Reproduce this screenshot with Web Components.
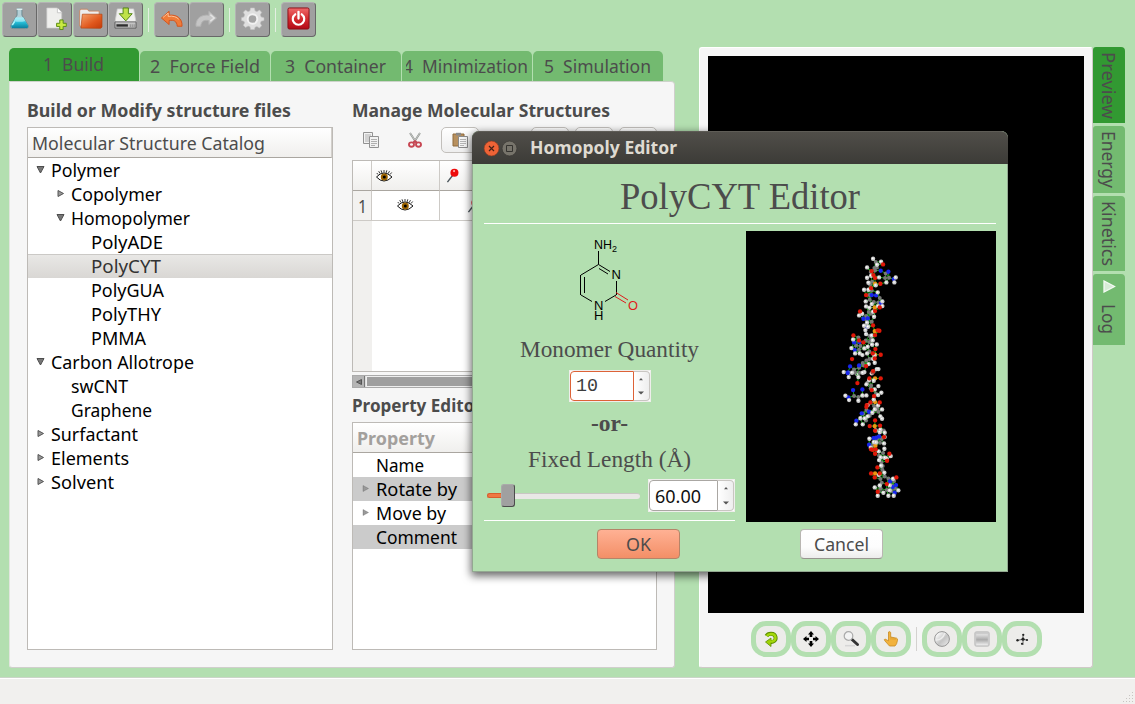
<!DOCTYPE html>
<html lang="en">
<head>
<meta charset="utf-8">
<title>Homopoly Editor</title>
<style>
html,body{margin:0;height:100%;overflow:hidden}
body{background:#b3dfb0;font:18px/24px "Noto Sans","Open Sans",sans-serif;color:#4c4c4c}
</style>
</head>
<body>
<md-workbench></md-workbench>
<script>
const ICONS = {
flask:`<svg viewBox="0 0 24 24"><defs><linearGradient id="g" x2="0" y2="1"><stop offset="0" stop-color="#8ee7f4"/><stop offset=".5" stop-color="#22b9d3"/><stop offset="1" stop-color="#0b7f9d"/></linearGradient></defs><path d="M9.500 1.500h5v7l6.300 10.200q1.500 3.800-2.300 3.800h-13q-3.800 0-2.300-3.800L9.500 8.500z" fill="#b4cfd6" stroke="#527982" stroke-width=".7"/><path d="M8 11h8l4.700 8q1.200 3-2 3h-13q-3.200 0-2-3z" fill="url(#g)"/><path d="M8 11h8l2 3.500q-6 2-12 0z" fill="#baf5fb" opacity=".6"/><path d="M9 2.300h6" stroke="#e7f5f5" stroke-width="1.500"/><path d="M7 15l-2.500 4" stroke="#b9f7fa" stroke-width="1.500"/></svg>`,
newfile:`<svg viewBox="0 0 24 24"><path d="M4 1h11l4.500 4.500V22H4z" fill="#efefed" stroke="#c9c9c9" stroke-width=".7"/><path d="M15 1v5h4.500" fill="#fff" stroke="#bcbcbc" stroke-width=".8"/><path d="M17.500 13.500h3.500v3.500h3.300v3.300H21v3.200h-3.500v-3.200h-3.300V17h3.300z" fill="#c9e943" stroke="#5a8c12" stroke-width="1"/></svg>`,
folder:`<svg viewBox="0 0 24 24"><defs><linearGradient id="g" x2="1" y2="1"><stop offset="0" stop-color="#f5a06a"/><stop offset=".6" stop-color="#e0571c"/><stop offset="1" stop-color="#c23b0a"/></linearGradient></defs><path d="M.700 20V4l1-1.700h7l1.500 2H21V20z" fill="#eee" stroke="#c77b52" stroke-width=".8"/><path d="M2 22l1.500-14.500H24V21l-1.500 1.300z" fill="url(#g)" stroke="#b5430f" stroke-width=".7"/></svg>`,
drive:`<svg viewBox="0 0 24 24"><path d="M3.500 2h17l2.500 14H1z" fill="#f0f0ee" stroke="#d0d0d0" stroke-width=".8"/><path d="M1 15.500h22v6.500H1z" fill="#c4c4c4" stroke="#4a4a4a" stroke-width=".8"/><path d="M2.500 18h12v2.500h-12z" fill="#2e2e2e"/><path d="M17 18v3m2-3v3m2-3v3" stroke="#888"/><path d="M9.500 1h5.500v6h4l-6.700 7.500L5.500 7h4z" fill="#bfe24a" stroke="#4f8415" stroke-width="1"/></svg>`,
undo:`<svg viewBox="0 0 24 24"><path d="M9.500 4.500L1.500 11.500l8 6.800v-4.200c5-.8 8 .5 8.500 6h5C23.500 11.500 17 7.700 9.500 8.600z" fill="#ef7b39" stroke="#d4511a" stroke-width="1" stroke-linejoin="round"/><path d="M3 11l5.500-4.700v3.500c5-.8 9 .5 11 3" fill="none" stroke="#ffc49a" stroke-width="1"/></svg>`,
redo:`<svg viewBox="0 0 24 24"><path d="M14.500 4.500l8 7-8 6.800v-4.200c-5-.8-8 .5-8.500 6H1C.5 11.500 7 7.700 14.500 8.600z" fill="#c5c5c5" stroke="#b2b2b2" stroke-width="1" stroke-linejoin="round"/><path d="M16 8l4 3.500-4 3.200" fill="none" stroke="#e3e3e3" stroke-width="1.500"/></svg>`,
gear:`<svg viewBox="0 0 24 24"><path d="M10 1h4l.6 3 2 .9L19.300 3.200l2.300 2.400-1.500 2.600.9 2.200 3 .7v3l-3 .7-.9 2.100 1.500 2.700-2.400 2.200-2.600-1.500-2 .8L14 23.500h-4l-.6-2.900-2-.8-2.700 1.500-2.300-2.300 1.500-2.600L3 14.800l-2.500-.7v-3L3 10.400l.9-2.200L2.400 5.600l2.300-2.400 2.700 1.700 2-.9z" fill="#dfdfdf" stroke="#c2c2c2" stroke-width=".6"/><circle cx="12" cy="12.500" r="5" fill="#a5a5a5" stroke="#f2f2f2" stroke-width="2"/></svg>`,
power:`<svg viewBox="0 0 24 24"><defs><linearGradient id="g" x2="0" y2="1"><stop offset="0" stop-color="#ee6a6a"/><stop offset=".5" stop-color="#d52d31"/><stop offset="1" stop-color="#b30a17"/></linearGradient></defs><rect x="1" y="1" width="22" height="22" rx="1.500" fill="url(#g)" stroke="#8b0b15" stroke-width="1"/><path d="M8.600 7.600a6 6 0 1 0 6.800 0" fill="none" stroke="#fff" stroke-width="2.300" stroke-linecap="round"/><path d="M12 5v7" stroke="#fff" stroke-width="2.400" stroke-linecap="round"/></svg>`,
copy:`<svg viewBox="0 0 16 16"><g fill="#f2f2f2" stroke="#929292"><path d="M.5.5h9v11h-9z"/><path d="M6.500 4.500h9v11h-9z"/></g><path d="M2 3h6M2 5h4M2 7h4M2 9h4M8 7.500h6M8 9.500h6M8 11.500h6M8 13.500h4" stroke="#b0b0b0"/></svg>`,
cut:`<svg viewBox="0 0 16 16"><path d="M3 1l6.500 10M13 1L6.500 11" stroke="#8c918c" stroke-width="1.900"/><path d="M3 1l6 9M13 1L7 10" stroke="#dedede" stroke-width=".7"/><g fill="none" stroke="#c74753" stroke-width="1.900"><ellipse cx="4.500" cy="12.600" rx="2.500" ry="2.200"/><ellipse cx="11.500" cy="12.600" rx="2.500" ry="2.200"/><path d="M6 11l2-2 2 2"/></g></svg>`,
paste:`<svg viewBox="0 0 16 16"><path d="M1 2h11v12H1z" fill="#b7905e" stroke="#8f6b3d"/><path d="M4 .8h5V3.500H4z" fill="#888"/><path d="M6.500 4.500h9v11h-9z" fill="#f5f5f5" stroke="#8b8b8b"/><path d="M8 7.500h6M8 9.500h6M8 11.500h6M8 13.500h4" stroke="#b5b5b5"/></svg>`,
eye:`<svg viewBox="0 0 17 13"><path d="M.5 7.500Q4 3.500 8 3.500t8 4Q12 11.500 8 11.500t-7.500-4z" fill="#fff" stroke="#111" stroke-width="1"/><circle cx="8.300" cy="7.500" r="3.500" fill="#9c6300"/><circle cx="8.300" cy="7.500" r="1.500" fill="#000"/><path d="M2 5L.8 3.500M4 4L2.700 1.700M6 3.500L5 .8M8 3.200V.5M10 3.500l.8-2.700M12 4.200l1.500-2.500M14 5l1.700-2" stroke="#222" stroke-width=".9"/></svg>`,
pin:`<svg viewBox="0 0 16 16"><path d="M1.500 15L7 8" stroke="#4c565c" stroke-width="1.500"/><circle cx="9" cy="5" r="4.300" fill="#ee0b0b"/><circle cx="8.600" cy="3.300" r="1.200" fill="#ffaaaa"/></svg>`,
rotate:`<svg viewBox="0 0 16 16"><path d="M3.500 5C5 2 11.500 1.500 12.500 6c.8 3.600-2.500 5.500-5.500 4.800" fill="none" stroke="#5c8e00" stroke-width="4"/><path d="M8 7L2.500 11 8 15.500z" fill="#9fd204" stroke="#5c8e00" stroke-width=".8"/><path d="M3.800 5C5.500 2.300 11.500 2 12.400 6c.7 3.300-2.500 5-5.500 4.600" fill="none" stroke="#a4d80b" stroke-width="2.400"/></svg>`,
move:`<svg viewBox="0 0 16 16"><path d="M8 0l3 3.500H9.300V6H6.700V3.500H5zM8 16l-3-3.500h1.700V10h2.600v2.500H11zM0 8l3.500-3v1.700H6v2.600H3.500V11zM16 8l-3.500 3V9.300H10V6.700h2.500V5z"/></svg>`,
zoom:`<svg viewBox="0 0 16 16"><path d="M2 14.700h10" stroke="#d6d6d6" stroke-width="1.500"/><path d="M9 8.500l5.500 5" stroke="#333" stroke-width="3" stroke-linecap="round"/><circle cx="5.500" cy="5" r="4.300" fill="#f3f3f3" stroke="#aaa" stroke-width="1.200"/></svg>`,
hand:`<svg viewBox="0 0 16 16"><path d="M5.500 1q1.500-1 2.200.5V6l6 1.200q1 .3.800 2l-.9 3.600L12 15H6.500L2 10Q.5 8.300 2 8l3.500 1.800z" fill="#f2b23d" stroke="#c88b23" stroke-width=".8"/><path d="M8 6v2.500M10 6.500v2.300M12 7v2" stroke="#cf9125" stroke-width=".6"/></svg>`,
sphere:`<svg viewBox="0 0 16 16"><defs><linearGradient id="g" x2="1" y2="1"><stop offset=".2" stop-color="#f4f4f4"/><stop offset=".55" stop-color="#c4c4c4"/><stop offset="1" stop-color="#efefef"/></linearGradient></defs><circle cx="8" cy="8" r="7.400" fill="url(#g)" stroke="#8c8c8c" stroke-width=".9"/><path d="M1.500 9Q8 9.500 11 2" fill="none" stroke="#ededed" stroke-width="1.500"/></svg>`,
cube:`<svg viewBox="0 0 16 16"><defs><linearGradient id="g" x2="0" y2="1"><stop offset="0" stop-color="#e2e2e2"/><stop offset=".5" stop-color="#aaa"/><stop offset="1" stop-color="#eee"/></linearGradient></defs><rect x=".8" y=".8" width="14.400" height="14.400" rx="1.500" fill="#ccc" stroke="#c1c1c1"/><rect x="2.200" y="3.200" width="11.600" height="11" fill="url(#g)"/></svg>`,
atoms:`<svg viewBox="0 0 16 16"><path d="M3 9.500l6-1.300 4 1M9 3v11" fill="none" stroke="#555" stroke-width=".9"/><g fill="#222"><circle cx="3.500" cy="9.300" r="1.200"/><circle cx="9" cy="8.200" r="1.600"/><circle cx="9.300" cy="3.800" r="1.100"/><circle cx="13" cy="9" r="1.100"/><circle cx="8" cy="12.800" r="1.100"/></g></svg>`
};
/* Registers an element whose shadow root is cloned from a template. */
function element(name, css, html, setup){
  const t=document.createElement('template');
  t.innerHTML=`<style>${css}</style>${html}`;
  customElements.define(name,class extends HTMLElement{
    constructor(){super();this.attachShadow({mode:'open'}).append(t.content.cloneNode(true));}
    connectedCallback(){ if(setup) setup(this,this.shadowRoot); }
  });
}
element('md-icon',`:host{display:block;width:26px;height:26px;flex:none}span{display:block;height:100%}svg{display:block;width:100%;height:100%;overflow:visible}`,`<span></span>`,
 (h,r)=>{r.querySelector('span').innerHTML=ICONS[h.getAttribute('name')];});

element('tool-button',`:host{display:flex;align-items:center;justify-content:center;box-sizing:border-box;width:35px;height:35px;background:#a0a0a0;border:1px solid #b4b4b4;border-right:1.500px solid #686868;border-bottom:1.500px solid #686868;border-radius:4px}md-icon{width:23px;height:23px;margin-top:-2px}`,`<div></div>`,
 (h,r)=>{r.querySelector('div').innerHTML=`<md-icon name="${h.getAttribute('icon')}"></md-icon>`;});
element('tool-separator',`:host{display:block;width:1px;height:24px;background:#e4efe2;margin:0 5px}`,``);
element('main-toolbar',`:host{display:flex;align-items:center;height:35px;padding:2px 2px 0;gap:0}.g{display:flex;gap:.3px}`,`
<div class="g"><tool-button icon="flask"></tool-button><tool-button icon="newfile"></tool-button><tool-button icon="folder"></tool-button><tool-button icon="drive"></tool-button></div><tool-separator></tool-separator>
<div class="g"><tool-button icon="undo"></tool-button><tool-button icon="redo"></tool-button></div><tool-separator></tool-separator>
<tool-button icon="gear"></tool-button><tool-separator></tool-separator><tool-button icon="power"></tool-button>`);

element('tab-item',`:host{display:flex;box-sizing:border-box;width:130px;height:30px;justify-content:center;background:#73ba70;border-radius:5px 5px 0 0;overflow:hidden;padding:3px 1px 0 0;white-space:pre}
:host([active]){height:33px;background:#329932;padding-top:4px}:host([clip]){padding-left:4px;padding-right:5px;justify-content:flex-start}.c{overflow:hidden;display:flex;justify-content:inherit}`,`<div class="c"><slot></slot></div>`);
element('tab-strip',`:host{display:flex;align-items:flex-end;gap:1px;height:33px;padding-left:0}`,`
<tab-item active><fit-text w="61">1  Build</fit-text></tab-item><tab-item><fit-text w="110">2  Force Field</fit-text></tab-item><tab-item><fit-text w="101">3  Container</fit-text></tab-item><tab-item clip><fit-text w="125" style="margin-left:-3px">4  Minimization</fit-text></tab-item><tab-item><fit-text w="107">5  Simulation</fit-text></tab-item>`);

element('tree-row',`:host{display:flex;height:24px;align-items:center;color:#000;box-sizing:border-box;padding-left:calc(8px + var(--d,0)*20px)}
:host([selected]){background:linear-gradient(#e9e8e6,#d9d7d4);color:#333;box-shadow:inset 0 1px #cbc9c6}
i{width:8px;height:24px;margin-right:7px;flex:none;display:flex;align-items:flex-start;justify-content:center}
svg{width:9px;height:9px;margin-top:7px;display:none;flex:none}:host([open]) .o,:host([closed]) .c{display:block}
:host([shade]){background:#cbcbcb}`,`<i><svg class="o" viewBox="0 0 9 9"><path d="M1 1.500h7L4.500 8z" fill="#777" stroke="#4d4d4d"/></svg><svg class="c" viewBox="0 0 9 9"><path d="M2 1.500v6L7.500 4.500z" fill="#999" stroke="#555" style="stroke-width:var(--sw,1)"/></svg></i><slot></slot>`);
element('column-header',`:host{display:flex;align-items:center;box-sizing:border-box;height:30px;padding-left:4px;background:linear-gradient(#fff,#f0efed);border-bottom:1px solid #aaa6a0;border-right:1px solid #d2cfcb}`,`<slot></slot>`);
element('structure-catalog',`:host{display:flex;flex-direction:column;width:306px}.box{flex:1;background:#fff;border:1px solid #bdbab6}b{height:24px;margin:16px 0 5px;display:block}`,`
<b><fit-text w="264">Build or Modify structure files</fit-text></b><div class="box"><column-header><fit-text w="233">Molecular Structure Catalog</fit-text></column-header><div class="rows"></div></div>`,
(h,r)=>{r.querySelector('.rows').innerHTML=[
[0,'open','Polymer',69],[1,'closed','Copolymer',91],[1,'open','Homopolymer',119],[2,'','PolyADE',72],[2,'selected','PolyCYT',70],[2,'','PolyGUA',73],[2,'','PolyTHY',70],[2,'','PMMA',55],[0,'open','Carbon Allotrope',143],[1,'','swCNT',57],[1,'','Graphene',81],[0,'closed','Surfactant',87],[0,'closed','Elements',78],[0,'closed','Solvent',63]]
.map(([d,s,t,w])=>`<tree-row style="--d:${d}" ${s}><fit-text w="${w}">${t}</fit-text></tree-row>`).join('');});

element('edit-toolbar',`:host{display:flex;height:26px;gap:6px}span{display:flex;align-items:center;justify-content:center;width:38px;box-sizing:border-box;border:1px solid transparent;border-radius:5px}.b{background:linear-gradient(#fff,#eee);border-color:#c2bfbb}md-icon{width:16px;height:16px}`,
`<span></span><span></span><span class="b" style="margin-left:1px"></span><span style="width:41px"></span><span class="b"></span><span class="b"></span><span class="b"></span>`,
(h,r)=>['copy','cut','paste'].forEach((n,i)=>{r.querySelectorAll('span')[i].innerHTML=`<md-icon name="${n}"></md-icon>`;}));
element('structure-table',`:host{display:grid;grid-template:30px 30px 1fr/19px 68px 1fr;height:212px;box-sizing:border-box;border:1px solid #bdbab6;background:#fff}
div{border-right:1px solid #cdcac6;border-bottom:1px solid #cdcac6;display:flex;align-items:center;box-sizing:border-box}.h{background:linear-gradient(#fff,#f0efed);border-bottom-color:#aaa6a0}.n{background:#f3f2f0}.last{background:#f1f0ee;border:0}md-icon{width:17px;height:14px}.p{width:15px;height:15px}`,
`<div class="h"></div><div class="h" style="padding-left:4px"><md-icon name="eye"></md-icon></div><div class="h" style="padding-left:6px"><md-icon class="p" name="pin"></md-icon></div><div class="n" style="justify-content:center"><fit-text w="9">1</fit-text></div><div style="padding-left:25px;padding-bottom:2px"><md-icon name="eye"></md-icon></div><div style="padding-left:27px"><md-icon class="p" name="pin"></md-icon></div><div class="last"></div>`);
element('scroll-strip',`:host{display:flex;height:13px;box-sizing:border-box;border:1px solid #aaa;background:#ddd;gap:1px}i{width:11px;background:#b5b5b5;border-right:1px solid #777;display:flex;align-items:center;justify-content:center}s{flex:1;background:#9f9f9f;border:1px solid #eee;border-width:1px}svg{width:6px;height:6px}`,`<i><svg viewBox="0 0 6 6"><path d="M5.500.5v5L.5 3z" fill="#777" stroke="#555"/></svg></i><s></s>`);
element('property-editor',`:host{display:block;flex:1;background:#fff;border:1px solid #bdbab6;box-sizing:border-box}column-header{color:#a3a09d;font-weight:bold}tree-row{padding-left:8px;--sw:.3}`,
`<column-header><fit-text w="78">Property</fit-text></column-header><tree-row><fit-text w="48">Name</fit-text></tree-row><tree-row closed shade><fit-text w="81">Rotate by</fit-text></tree-row><tree-row closed><fit-text w="70">Move by</fit-text></tree-row><tree-row shade><fit-text w="81">Comment</fit-text></tree-row>`);
element('structure-manager',`:host{display:flex;flex-direction:column;width:305px}b{display:block;height:24px}edit-toolbar{margin:5px 0 7px}scroll-strip{margin:3px 0 5px}`,
`<b style="margin-top:16px"><fit-text w="258">Manage Molecular Structures</fit-text></b><edit-toolbar></edit-toolbar><structure-table></structure-table><scroll-strip></scroll-strip><b style="height:29px"><fit-text w="130">Property Editor</fit-text></b><property-editor></property-editor>`);
element('build-pane',`:host{display:flex;flex-direction:column;width:666px}.page{flex:1;display:flex;gap:19px;box-sizing:border-box;padding:0 17px 17px;background:#f6f6f6;border:1px solid #e2e5df;border-top-color:#cdd3ca;border-right-color:#d0cfcc;border-bottom-color:#d0cfcc;border-radius:0 4px 3px 3px}`,
`<tab-strip></tab-strip><div class="page"><structure-catalog></structure-catalog><structure-manager></structure-manager></div>`);

element('view-button',`:host{display:flex;align-items:center;justify-content:center;box-sizing:border-box;width:40px;height:36px;border:5px solid #b3dfb0;border-radius:15px;background:#edecea}md-icon{width:16px;height:16px}`,`<div></div>`,
(h,r)=>{r.querySelector('div').innerHTML=`<md-icon name="${h.getAttribute('icon')}"></md-icon>`;});
element('preview-pane',`:host{display:flex;flex-direction:column;box-sizing:border-box;width:394px;background:#f6f6f6;border:1px solid #fff;border-right-color:#cfcac7;border-bottom-color:#cfcac7;padding:8px 8px 0;border-radius:3px}.v{height:557px;background:#000}.b{display:flex;align-items:center;padding:8px 0 0 43px}i{width:1px;height:24px;background:#d4d2d0;margin:0 5px}`,
`<div class="v"></div><div class="b"><view-button icon="rotate"></view-button><view-button icon="move"></view-button><view-button icon="zoom"></view-button><view-button icon="hand"></view-button><i></i><view-button icon="sphere"></view-button><view-button icon="cube"></view-button><view-button icon="atoms"></view-button></div>`);
element('side-tabs',`:host{display:flex;flex-direction:column;gap:3px;width:32px}div{writing-mode:vertical-rl;box-sizing:border-box;background:#73ba70;border-radius:3px 4px 0 0;display:flex;align-items:center;padding-top:5px;padding-right:2px;justify-content:flex-start;line-height:27px}.a{background:#329932}svg{width:14px;height:13px;margin-bottom:19px;margin-right:-2px}`,
`<div class="a" style="height:76px"><fit-text v w="67">Preview</fit-text></div><div style="height:67px"><fit-text v w="57">Energy</fit-text></div><div style="height:75px"><fit-text v w="65">Kinetics</fit-text></div><div style="height:71px;padding-top:6px"><svg viewBox="0 0 14 13"><path d="M2 1v11l10.500-5.500z" fill="#d8ecd7" stroke="#f4faf4" stroke-width="1.300"/></svg><fit-text v w="30" style="margin-top:-8px">Log</fit-text></div>`);
element('status-bar',`:host{display:flex;justify-content:flex-end;align-items:flex-end;height:27px;box-sizing:border-box;background:#f1f0ee;border-top:1px solid #cbd5c8;box-shadow:inset 0 1px #fff}svg{width:13px;height:13px}`,`<svg viewBox="0 0 13 13"><g fill="#c8c5c1"><path d="M10 1h1v1h-1zM10 4h1v1h-1zM7 4h1v1H7zM10 7h1v1h-1zM7 7h1v1H7zM4 7h1v1H4zM10 10h1v1h-1zM7 10h1v1H7zM4 10h1v1H4zM1 10h1v1H1z"/></g></svg>`);

element('cytosine-diagram',`:host{display:block;width:64px;height:88px}svg{display:block}text{font:13px "Liberation Sans",sans-serif}`,
`<svg width="64" height="88"><g fill="none" stroke="#000" stroke-width="1"><path d="M21.500 16v13.500M21.500 29.500L4 40M3.500 40v20M7.500 42v16M4 60l11 6.500M28 66.500L39 60M39.500 60V46M21.500 29.500L33 36.500M22 33.500l9 5.500"/><path d="M39 57.500L51 65M38 61.500L49 68" stroke="#e01b1b"/></g><g text-anchor="start"><text x="17" y="14" textLength="18" lengthAdjust="spacingAndGlyphs">NH</text><text x="35" y="17" style="font-size:9px">2</text><text x="34.500" y="44" textLength="9">N</text><text x="17" y="75" textLength="9">N</text><text x="17" y="85" textLength="9">H</text><text x="51" y="74.500" fill="#e01b1b" textLength="10" lengthAdjust="spacingAndGlyphs">O</text></g></svg>`);

/* Atom positions of the chain, by element letter, in thirds of a pixel. */
const CHAIN=[[84,14,{
w:'128 40,152 49,110 66,140 58,110 97,122 91,146 96,196 96,168 111,192 111,114 112,101 133,136 120,114 133,156 168,156 182,143 182,106 168,117 187,107 183,86 210,95 205,128 199,131 214,110 232,113 244,105 254,107 266,124 270,127 285,139 297,68 282,63 308,74 324,88 324,102 309,112 304,125 298,96 329,110 324,132 330,128 341,54 384,40 380,80 385,102 380,124 384,139 371,144 371,133 352,115 356,142 141,124 176,101 241',
g:'136 50,139 66,134 75,121 80,166 84,164 98,176 97,132 68,125 109,119 118,117 149,118 163,130 170,144 171,115 200,111 216,122 205,124 229,107 212,108 223,117 271,122 280,117 290,84 276,77 300,90 302,86 313,106 285,117 341,108 345,97 353,100 360,71 372,86 367,130 378,117 318,148 158,124 135',
r:'158 57,124 77,134 98,150 115,122 128,107 149,134 197,148 186,89 198,128 240,134 269,147 256,142 255,69 270,99 291,135 311,127 324,133 339,151 328,65 341,107 362,127 381,86 285,129 89',
b:'151 76,174 79,190 101,124 149,137 150,152 173,99 220,112 219,110 245,71 291,87 290,73 314,59 363,86 360,53 381',
o:'134 115,133 186,133 257,134 328'}],
[84,139,{
w:'65 7,97 7,84 20,55 20,130 31,116 29,144 47,143 74,153 67,108 42,133 57,96 75,108 75,84 91,56 89,45 76,130 87,155 117,143 105,112 104,155 145,150 138,103 144,97 162,76 162,90 143,112 138,133 117,136 180,150 178,163 187,163 200,161 219,117 205,130 215,121 232,137 216,148 185,162 235,145 243,151 261,181 257,164 262,146 269,169 265,152 286,162 307,145 314,133 351,148 345,159 367,142 376,178 345,174 376,190 376,204 360,178 360,188 325,126 127',
g:'74 7,88 7,127 5,111 37,122 45,137 70,121 54,97 76,71 77,84 80,121 97,131 107,108 119,98 130,91 145,107 150,118 136,144 124,140 114,148 186,160 180,144 200,139 208,128 224,154 206,149 217,158 248,146 256,161 262,153 276,157 287,156 298,163 318,150 326,154 337,151 355,145 363,174 324,191 332,184 345,169 359,184 362,194 354',
r:'81 38,128 2,117 24,151 24,131 77,109 104,124 59,148 96,120 96,134 150,118 167,149 166,134 181,161 200,122 237,136 237,127 238,134 250,177 250,170 271,141 291,122 309,148 309,133 321,198 321,169 341,142 364,108 110',
b:'54 81,68 59,96 57,52 8,94 129,78 151,116 124,116 223,129 203,146 198,193 367,197 344,179 333,187 350,137 202',
o:'134 24,134 95,133 167,135 226,134 309'}]];
element('polymer-view',`:host{display:block;width:250px;height:291px;background:#000}svg{display:block}`,`<svg width="250" height="291"></svg>`,(h,r)=>{
 const col={w:'#cfcfcf',g:'#777',r:'#e01809',b:'#1826ee',o:'#ed9510'};let out='';
 for(const [tx,ty,set] of CHAIN){const a=[];for(const k in set)for(const p of set[k].split(',')){const [x,y]=p.split(' ').map(Number);a.push({k,x,y});}
 let bonds='',dots='';
 a.forEach((p,i)=>a.slice(i+1).forEach(q=>{if(Math.hypot(p.x-q.x,p.y-q.y)<19&&!(p.k=='w'&&q.k=='w'))bonds+=`M${p.x} ${p.y}L${q.x} ${q.y}`;}));
 for(const p of a.sort((m,n)=>'gobwr'.indexOf(m.k)-'gobwr'.indexOf(n.k)))dots+=`<circle cx="${p.x}" cy="${p.y}" r="${p.k=='g'?6:6.5}" fill="${col[p.k]}"/>`+(p.k=='w'?`<circle cx="${p.x-1}" cy="${p.y-1}" r="2.500" fill="#fff"/>`:'');
 out+=`<g transform="translate(${tx+.4} ${ty+.4}) scale(.3333)"><path d="${bonds}" stroke="#19ad19" stroke-width="3"/>${dots}</g>`;}
 r.querySelector('svg').innerHTML=out;});

element('spin-field',`:host{display:flex;box-sizing:border-box;height:32px;border:1px solid #efeeec;background:#fff;color:#111}.f{flex:1;border:1px solid #aaa7a3;border-radius:4px 0 0 4px;display:flex;align-items:center;padding-left:5px}:host([focused]) .f{border:1.500px solid #dd6237}:host([focused]){color:#3c3c3c}.s{width:15px;border:1px solid #c9c6c2;border-left:0;border-radius:0 4px 4px 0;background:linear-gradient(90deg,#fff,#eee);display:flex;flex-direction:column;align-items:center;justify-content:space-around}svg{width:6px;height:4px}`,
`<div class="f"><slot></slot></div><div class="s"><svg viewBox="0 0 6 4"><path d="M1 3.200L3 1l2 2.200z" fill="#555"/></svg><svg viewBox="0 0 6 4"><path d="M0 .5h6L3 3.500z" fill="#555"/></svg></div>`);
element('length-slider',`:host{display:flex;align-items:center;width:153px;height:24px}.a{background:#ef7843;border:1px solid #d85d2e;border-right:0;border-radius:3px 0 0 3px;width:13px;height:3px}.k{width:14px;height:23px;box-sizing:border-box;background:#a0a0a0;border:1px solid #aaa;border-right-color:#4c4c4c;border-bottom-color:#4c4c4c;border-radius:3px}.r{flex:1;height:6px;background:#e9e8e6;border-top:1px solid #c9c6c3;box-sizing:border-box;border-radius:0 3px 3px 0}`,`<div class="a"></div><div class="k"></div><div class="r"></div>`);
element('push-button',`:host{display:flex;align-items:center;justify-content:center;box-sizing:border-box;width:83px;height:30px;border:1px solid #b9b6b2;border-bottom-color:#98958f;border-radius:4px;background:linear-gradient(#fff,#fdfdfd 60%,#ececeb)}:host([primary]){background:linear-gradient(#ffb194,#f38f67);border-color:#b58468}`,`<slot></slot>`);
element('homopoly-dialog',`:host{display:flex;flex-direction:column;box-sizing:border-box;width:536px;height:441px;background:#b3dfb0;border-radius:7px 7px 0 0;box-shadow:0 3px 9px 1px rgba(0,0,0,.6),inset 0 0 0 1px #93a891}
header{height:33px;flex:none;display:flex;align-items:center;padding:0 0 2px 11px;background:linear-gradient(#504e49,#3c3b37);border-radius:7px 7px 0 0;border-top:1px solid #5e5c56;box-sizing:border-box;color:#dfdbd2;font-weight:bold;font-size:17.500px}
header svg{width:35px;height:17px;margin:2px 12px 0 0}
.t{font:37px/42px "Liberation Serif",serif;text-align:center;height:60px;padding-top:12px;box-sizing:border-box;margin:0 12px;border-bottom:1.500px solid #fff}
.m{display:grid;grid-template-columns:251px 250px;column-gap:11px;padding:7px 12px 0;height:297px;box-sizing:border-box}
.l{display:flex;flex-direction:column;align-items:center;border-bottom:1.500px solid #fff;box-sizing:border-box;height:290px}
.x{font:24px/28px "Liberation Serif",serif;color:#4c4c4c}.row{display:flex;align-items:center;width:100%;padding-left:3px;box-sizing:border-box;gap:8px}
.f{display:grid;grid-template-columns:309px 262px;padding:8px 0 0}`,
`<header><svg viewBox="0 0 35 17"><circle cx="8.500" cy="8.500" r="7.400" fill="#ee6336" stroke="#8f3b20" stroke-width=".6"/><path d="M6 6l5 5m0-5l-5 5" stroke="#432117" stroke-width="1.200"/><circle cx="26.500" cy="8.500" r="7.400" fill="#77746b" stroke="#34332f" stroke-width=".6"/><path d="M23.500 5.500h6v6h-6z" fill="none" stroke="#34332f" stroke-width="1"/></svg><fit-text w="147">Homopoly Editor</fit-text></header>
<div class="t"><fit-text w="240">PolyCYT Editor</fit-text></div>
<div class="m"><div class="l"><cytosine-diagram style="margin:4px 0 0;padding-right:2px"></cytosine-diagram><div class="x" style="margin-top:12px"><fit-text w="179">Monomer Quantity</fit-text></div><spin-field focused style="width:82px;margin-top:7px"><fit-text w="22" style="font:19px/24px 'Liberation Mono',monospace">10</fit-text></spin-field><div class="x" style="margin-top:7px;font-weight:bold"><fit-text w="37">-or-</fit-text></div><div class="x" style="margin:8px 1px 0 0"><fit-text w="163">Fixed Length (Å)</fit-text></div><div class="row" style="margin-top:6px"><length-slider></length-slider><spin-field style="width:87px;height:33px"><fit-text w="46">60.00</fit-text></spin-field></div></div><polymer-view></polymer-view></div>
<div class="f"><push-button primary style="margin-left:125px"><fit-text w="25">OK</fit-text></push-button><push-button style="margin-left:19px"><fit-text w="55">Cancel</fit-text></push-button></div>`);
element('md-workbench',`:host{display:flex;flex-direction:column;width:1135px;height:704px;position:relative;overflow:hidden;background:#b3dfb0}main{display:flex;flex:1;padding:10px 0 9px 9px;box-sizing:border-box}build-pane{margin-top:1px}preview-pane{margin-left:24px}homopoly-dialog{position:absolute;left:472px;top:131px}`,
`<main-toolbar></main-toolbar><main><build-pane></build-pane><preview-pane></preview-pane><side-tabs></side-tabs></main><status-bar></status-bar><homopoly-dialog></homopoly-dialog>`);
/* A text run condensed or stretched to the width given in w. */
element('fit-text',`:host{display:inline-block;white-space:pre;flex:none}span{display:inline-block;transform-origin:0 0}`,`<span><slot></slot></span>`,(h,r)=>{
 const s=r.querySelector('span'),w=+h.getAttribute('w'),v=h.hasAttribute('v'),b=s.getBoundingClientRect(),n=v?b.height:b.width;
 h.style[v?'height':'width']=w+'px';s.style.transform=v?`scaleY(${w/n})`:`scaleX(${w/n})`;});
</script>
</body>
</html>
